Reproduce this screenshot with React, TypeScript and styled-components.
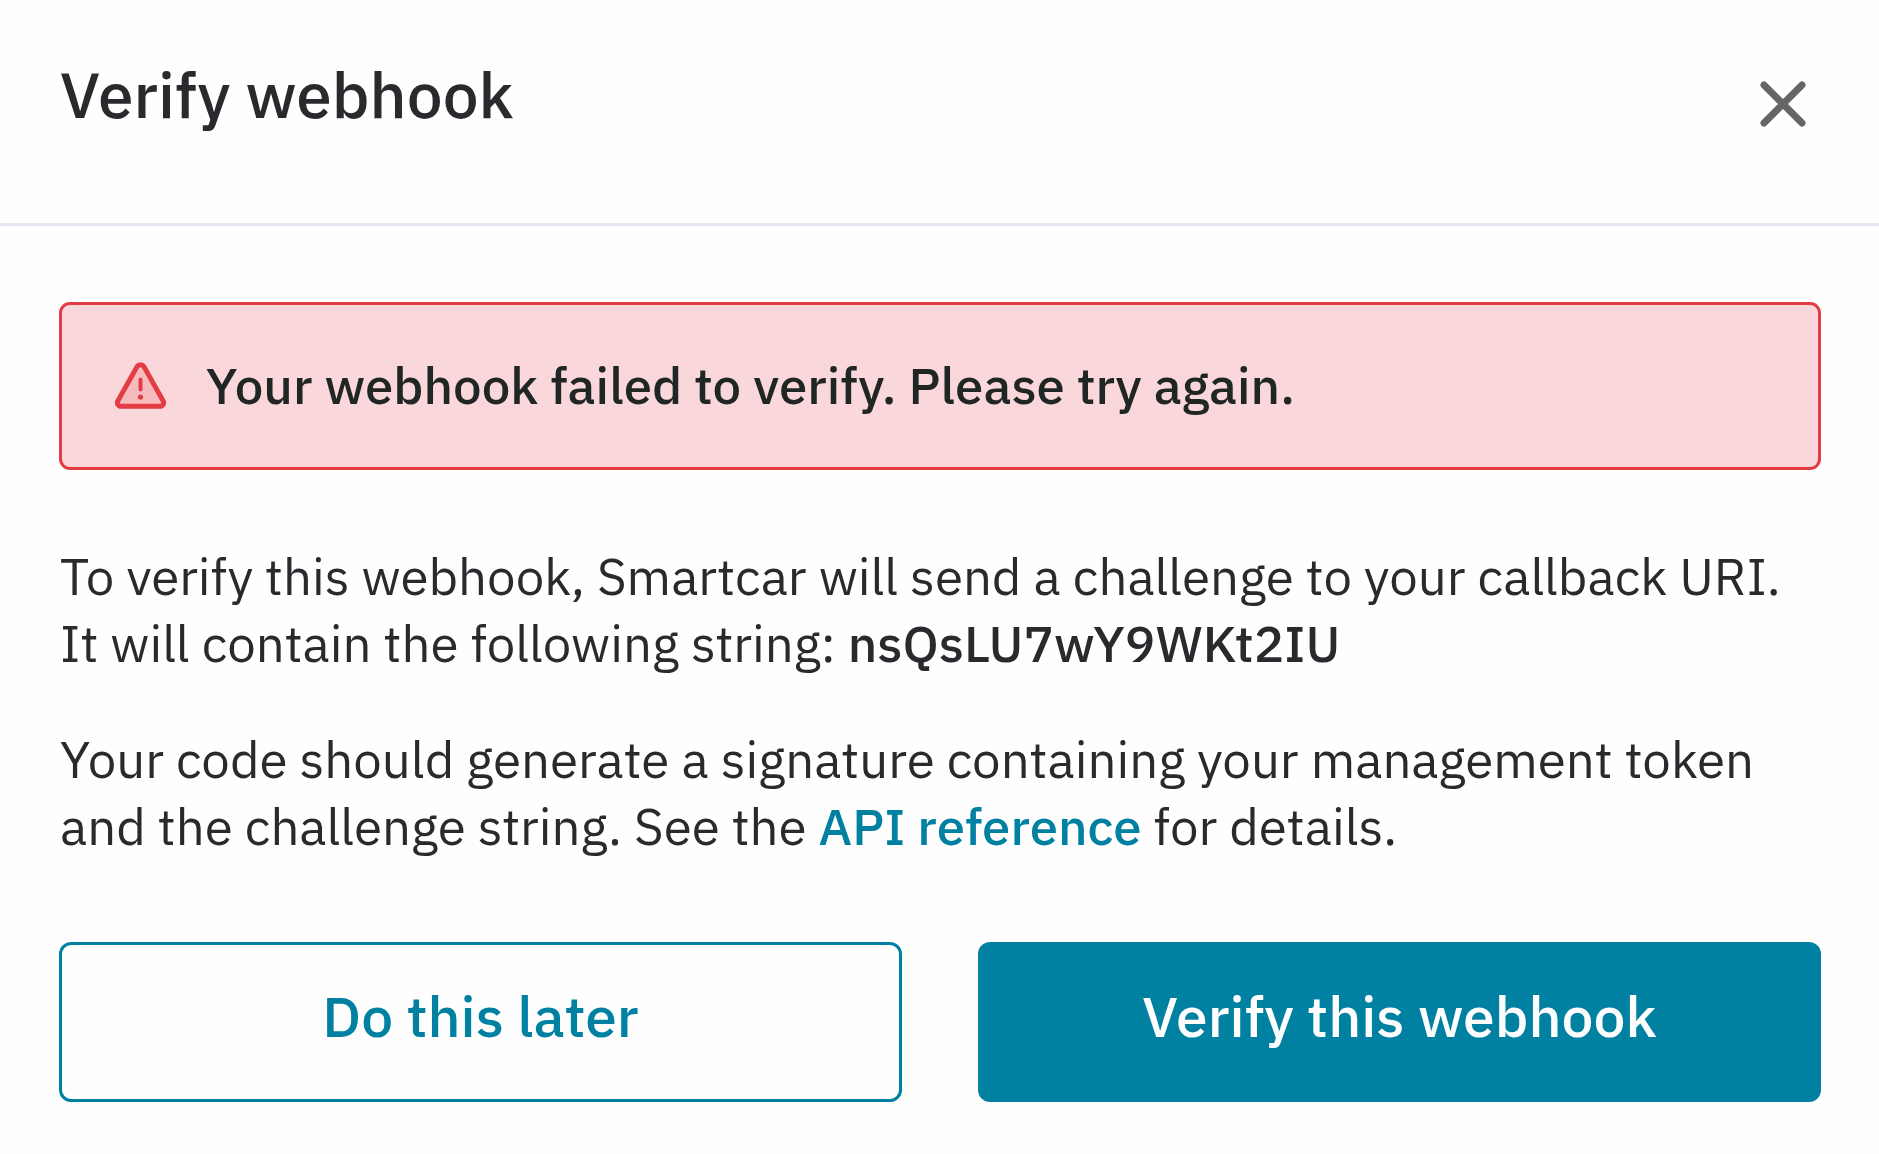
import React from "react";
import styled, { createGlobalStyle, css } from "styled-components";

const color = {
  surface: "#fefefe",
  text: "#2b292d",
  alertText: "#1f2623",
  divider: "#e6e6f0",
  icon: "#676568",
  danger: "#e33d43",
  dangerSoft: "#fad7db",
  primary: "#0081a2",
};

const fontStack = `"IBM Plex Sans", "Open Sans", sans-serif`;

const GlobalStyle = createGlobalStyle`
  *, *::before, *::after {
    box-sizing: border-box;
  }

  body {
    margin: 0;
    background: ${color.surface};
    color: ${color.text};
    font-family: ${fontStack};
  }
`;

const Dialog = styled.section`
  display: flex;
  flex-direction: column;
  width: 100%;
`;

const Header = styled.header`
  display: flex;
  align-items: flex-start;
  justify-content: space-between;
  padding: 54px 60px 69px;
  border-bottom: 3px solid ${color.divider};
`;

const Title = styled.h1`
  margin: 0;
  font: 500 64px/80px ${fontStack};
`;

const CloseButton = styled.button`
  display: flex;
  align-items: center;
  justify-content: center;
  width: 72px;
  height: 100px;
  padding: 0;
  border: 0;
  background: none;
  color: ${color.icon};
  cursor: pointer;
`;

const Content = styled.div`
  display: flex;
  flex-direction: column;
  padding: 76px 58px 52px 59px;
`;

const Alert = styled.div`
  display: flex;
  align-items: center;
  gap: 40px;
  padding: 48px 53px 50px;
  border: 3px solid ${color.danger};
  border-radius: 11px;
  background: ${color.dangerSoft};
  color: ${color.alertText};
  font: 500 51px/64px ${fontStack};
`;

const AlertIcon = styled.svg`
  flex: none;
  width: 51px;
  height: 47px;
`;

const Copy = styled.div`
  display: flex;
  flex-direction: column;
  gap: 49px;
  padding: 73px 2px 82px 1px;
  font-size: 51px;
  line-height: 67px;
`;

const Paragraph = styled.p`
  margin: 0;
`;

const Challenge = styled.strong`
  font-weight: 500;
`;

const Link = styled.a`
  color: ${color.primary};
  font-weight: 500;
  text-decoration: none;
`;

const Actions = styled.div`
  display: grid;
  grid-template-columns: 1fr 1fr;
  gap: 76px;
`;

const ActionButton = styled.button<{ $primary?: boolean }>`
  padding: 34px 24px 46px;
  border: 3px solid ${color.primary};
  border-radius: 12px;
  background: transparent;
  color: ${color.primary};
  font: 500 57px/74px ${fontStack};
  cursor: pointer;

  ${({ $primary }) =>
    $primary &&
    css`
      background: ${color.primary};
      color: ${color.surface};
    `}
`;

export default function App() {
  return (
    <>
      <GlobalStyle />
      <Dialog role="dialog" aria-labelledby="dialog-title">
        <Header>
          <Title id="dialog-title">Verify webhook</Title>
          <CloseButton type="button" aria-label="Close">
            <svg width="46" height="46" viewBox="0 0 46 46" fill="none" stroke="currentColor" strokeWidth="7" strokeLinecap="round">
              <path d="M4 4 42 42M42 4 4 42" />
            </svg>
          </CloseButton>
        </Header>
        <Content>
          <Alert role="alert">
            <AlertIcon viewBox="0 0 51 47" fill="none" stroke={color.danger} strokeLinecap="round" strokeLinejoin="round" aria-hidden="true">
              <path
                d="M22.2 4.4a4 4 0 0 1 6.6 0L48 38.6a3.6 3.6 0 0 1-3.2 5.6H6.2A3.6 3.6 0 0 1 3 38.6Z"
                fill={color.danger}
                fillOpacity="0.18"
                strokeWidth="5"
              />
              <path d="M25.5 17.5v10" strokeWidth="4" />
              <circle cx="25.5" cy="35" r="2.6" fill={color.danger} stroke="none" />
            </AlertIcon>
            <span>Your webhook failed to verify. Please try again.</span>
          </Alert>
          <Copy>
            <Paragraph>
              To verify this webhook, Smartcar will send a challenge to your callback URI. It will
              contain the following string: <Challenge>nsQsLU7wY9WKt2IU</Challenge>
            </Paragraph>
            <Paragraph>
              Your code should generate a signature containing your management token and the
              challenge string. See the <Link href="#api-reference">API reference</Link> for
              details.
            </Paragraph>
          </Copy>
          <Actions>
            <ActionButton type="button">Do this later</ActionButton>
            <ActionButton type="button" $primary>
              Verify this webhook
            </ActionButton>
          </Actions>
        </Content>
      </Dialog>
    </>
  );
}
